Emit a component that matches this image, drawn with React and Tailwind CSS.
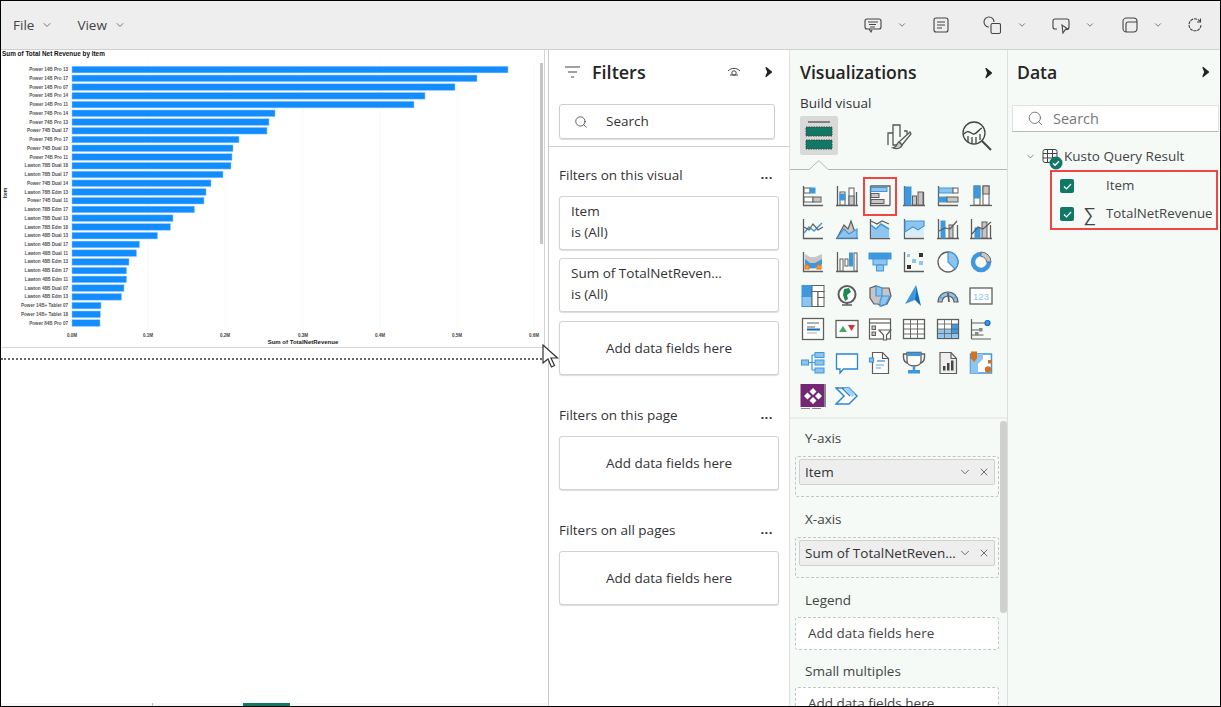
import React from 'react';
import { ChevronDown, X, Search } from 'lucide-react';

const FONT = "font-['Open_Sans','Noto_Sans',sans-serif]";
const G = '#5f5e5c';
const B = '#3f97dd';
const L = '#8ec4ee';
const C = '#c8c6c4';
const O = '#d9701e';
const T = '#117865';

// Bars read off the reference: [label, right edge in px]
const bars = [
    ['Power 14B Pro 13', 508], ['Power 14B Pro 17', 477], ['Power 14B Pro 07', 455], ['Power 14B Pro 14', 425],
    ['Power 14B Pro 11', 414], ['Power 74B Pro 14', 275], ['Power 74B Pro 13', 269], ['Power 74B Dual 17', 267],
    ['Power 74B Pro 17', 239], ['Power 74B Dual 13', 233], ['Power 74B Pro 11', 232], ['Lawton 78B Dual 18', 231],
    ['Lawton 78B Dual 17', 223], ['Power 74B Dual 14', 211], ['Lawton 78B Edm 13', 206], ['Power 74B Dual 11', 204],
    ['Lawton 78B Edm 17', 194.5], ['Lawton 78B Dual 13', 173], ['Lawton 78B Edm 18', 170.5], ['Lawton 48B Dual 13', 157.5],
    ['Lawton 48B Dual 17', 139.5], ['Lawton 48B Dual 11', 136.5], ['Lawton 48B Edm 13', 129], ['Lawton 48B Edm 17', 126.5],
    ['Lawton 48B Edm 11', 126.5], ['Lawton 48B Dual 07', 124], ['Lawton 48B Edm 13', 121.5], ['Power 14B+ Tablet 07', 101],
    ['Power 14B+ Tablet 18', 100.3], ['Power 84B Pro 07', 100],
];
const ticks = [['0.0M', 72], ['0.1M', 148], ['0.2M', 225], ['0.3M', 303], ['0.4M', 380], ['0.5M', 457], ['0.6M', 534]];

const Chart = () => (
    <svg width="543" height="297" viewBox="1 50 543 297" className="block">
        <text x="2" y="55.5" fontSize="6.4" fontWeight="700" fill="#111" fontFamily="Liberation Sans">Sum of Total Net Revenue by Item</text>
        {ticks.map(([t, x]) => (
            <g key={t}>
                <line x1={x} x2={x} y1="63" y2="330" stroke="#eeeeee" strokeWidth="0.7" strokeDasharray="1 1" />
                <text x={x} y="337" fontSize="4.6" fontWeight="700" textAnchor="middle" fill="#444" fontFamily="Liberation Sans">{t}</text>
            </g>
        ))}
        {bars.map(([name, end], i) => {
            const y = 69.6 + i * 8.74;
            return (
                <g key={i}>
                    <text x="68" y={y + 1.6} fontSize="4.6" fontWeight="700" textAnchor="end" fill="#555" fontFamily="Liberation Sans">{name}</text>
                    <rect x="72" y={y - 3.3} width={end - 72} height="6.6" fill="#118dff" stroke="#8fc8fb" strokeWidth="0.5" />
                </g>
            );
        })}
        <text x="303" y="343.5" fontSize="6" fontWeight="700" textAnchor="middle" fill="#222" fontFamily="Liberation Sans">Sum of TotalNetRevenue</text>
        <text x="0" y="0" fontSize="5" fontWeight="700" textAnchor="middle" fill="#222" fontFamily="Liberation Sans" transform="translate(7 193) rotate(-90)">Item</text>
        <rect x="540" y="63" width="3" height="181" fill="#c4c6c4" />
    </svg>
);

const PanelArrow = () => (
    <svg width="10" height="12" viewBox="0 0 10 12"><path d="M2 1.500 L7.500 6 L2 10.500 L3.800 6 Z" fill="#222" stroke="#222" strokeWidth="1.200" strokeLinejoin="round" /></svg>
);

const Ico = ({ children, s = 24 }) => (
    <svg width={s} height={s} viewBox="0 0 24 24" fill="none" strokeWidth="1.2">{children}</svg>
);

const axis = <path d="M2.500 2v19.500H22" stroke={G} strokeWidth="1.3" />;
const axisB = <path d="M1 21.500h22M2.500 2v19.500M21.500 8v13.500" stroke={G} strokeWidth="1.3" />;

const Box = ({ x, y, w, h, f = C, st = G }) => <rect x={x} y={y} width={w} height={h} fill={f} stroke={st} strokeWidth="1" />;

const vizIcons = [
    // row 1: bar and column charts
    <Ico>{axis}<Box x="3" y="4" w="6" h="5" st={G} f="#fff" /><Box x="9" y="4" w="5" h="5" f={B} st={B} /><Box x="3" y="13" w="9" h="5" f="#fff" /><Box x="12" y="13" w="8" h="5" /></Ico>,
    <Ico>{axisB}<Box x="5" y="8" w="5" h="13" f="#fff" /><Box x="5" y="10" w="5" h="6" f={B} st={B} /><Box x="14" y="4" w="5" h="17" f="#fff" /><Box x="14" y="12" w="5" h="9" /></Ico>,
    <Ico>{axis}<path d="M2.500 2H22V21.500" stroke={G} strokeWidth="1.3" /><Box x="3" y="3.500" w="16" h="4" f={L} st={B} /><Box x="3" y="9.500" w="8" h="4" /><Box x="3" y="15.500" w="13" h="4" /></Ico>,
    <Ico>{axisB}<Box x="3" y="3" w="6" h="18" f={B} st={B} /><Box x="10.500" y="12" w="4" h="9" /><Box x="16" y="8" w="5" h="13" /></Ico>,
    <Ico>{axis}<Box x="3" y="4" w="14" h="5" f={L} st={B} /><Box x="17" y="4" w="5" h="5" f="#fff" /><Box x="3" y="13" w="8" h="5" f={B} st={B} /><Box x="11" y="13" w="11" h="5" /></Ico>,
    <Ico><path d="M1 21.500h22" stroke={G} strokeWidth="1.3" /><Box x="5" y="2" w="6" h="19" f="#fff" /><Box x="5" y="2" w="6" h="12" f={B} st={B} /><Box x="14" y="2" w="6" h="19" f="#fff" /><Box x="14" y="2" w="6" h="8" /></Ico>,
    // row 2: line and area charts
    <Ico>{axis}<path d="M3 16l5-6 5 4 8-8" stroke={B} strokeWidth="1.5" /><path d="M3 10l5 3 4-6 5 6 5-3" stroke={G} /></Ico>,
    <Ico><path d="M1 21.500h22" stroke={G} strokeWidth="1.3" /><path d="M2 21l7-13 4 4 3-8 6 17z" fill={C} stroke={G} /><path d="M2 21l7-9 5 5 8-5v9z" fill={L} stroke={B} /></Ico>,
    <Ico>{axis}<path d="M3 8l5 4 5-5 8 5v9H3z" fill={L} /><path d="M3 8l5 4 5-5 8 5" stroke={B} strokeWidth="1.5" /><path d="M3 4l6 3 5-3 7 3" stroke={G} /></Ico>,
    <Ico>{axis}<path d="M3 4h19v5l-6 4-5-3-8 5z" fill={L} stroke={B} /><path d="M3 16l8-5 5 3 6-4v10H3z" fill="#d8ecfa" /></Ico>,
    <Ico>{axisB}<Box x="5" y="4" w="4" h="17" f={B} st={B} /><Box x="13" y="8" w="4" h="13" /><path d="M3 14l6-3 5 1 7-8" stroke={G} /></Ico>,
    <Ico>{axisB}<Box x="6" y="11" w="5" h="10" f={B} st={B} /><Box x="13" y="5" w="5" h="16" /><path d="M3 17l6-7 5 2 8-7" stroke={G} /></Ico>,
    // row 3: ribbon, waterfall, funnel, scatter, pie, donut
    <Ico>{axis}<path d="M4 4l5 3 5 0 7-3v12l-7 3-5 0-5-3z" fill={C} /><path d="M4 9l5 4h5l7-4v5l-7 4H9l-5-4z" fill={B} /><Box x="4" y="15" w="4" h="4" f="#f0a040" st={O} /><Box x="16" y="15" w="4" h="4" f="#f0a040" st={O} /></Ico>,
    <Ico>{axisB}<Box x="5" y="9" w="3" h="12" f="#fff" /><Box x="10" y="9" w="3" h="7" f="#fff" /><Box x="14.500" y="3" w="3" h="13" f={B} st={B} /><Box x="19" y="3" w="3" h="18" f="#fff" /></Ico>,
    <Ico><Box x="1" y="3" w="22" h="6" f={B} st={B} /><Box x="5" y="9" w="14" h="6" f={L} st={B} /><Box x="8.500" y="15" w="7" h="6" f={L} st={B} /></Ico>,
    <Ico>{axis}<rect x="17" y="3" width="4" height="4" fill="#333" /><rect x="10" y="9" width="4" height="4" fill={L} /><rect x="17" y="11" width="4" height="4" fill={L} /><rect x="5" y="15" width="4" height="4" fill="#333" /><rect x="5" y="4" width="3" height="3" fill={L} /></Ico>,
    <Ico><circle cx="12" cy="12" r="10" fill="#fff" stroke={G} strokeWidth="1.3" /><path d="M12 2a10 10 0 0 1 7 17l-7-7z" fill={L} stroke={B} /></Ico>,
    <Ico><circle cx="12" cy="12" r="8" stroke={B} strokeWidth="4.5" /><path d="M12 2a10 10 0 0 1 10 10h-4.500A5.500 5.500 0 0 0 12 6.500z" fill={C} stroke={G} strokeWidth="0.8" /></Ico>,
    // row 4: treemap, map, filled map, azure map, gauge, card
    <Ico><Box x="1" y="1.500" w="10" h="11" f={B} st={B} /><Box x="1" y="12.500" w="10" h="10" f={L} st={B} /><Box x="11" y="1.500" w="12" h="6" f="#fff" /><Box x="11" y="7.500" w="6" h="15" f="#fff" /><Box x="17" y="7.500" w="6" h="6" f="#fff" /><Box x="17" y="13.500" w="6" h="9" f="#fff" /></Ico>,
    <Ico><circle cx="12" cy="10.500" r="8.500" fill="#fff" stroke={G} strokeWidth="2" /><path d="M9 5l5-1 2 4-4 3 1 4-3 2-2-6z" fill="#1c8a4c" /><path d="M7 21h10M12 19v2" stroke={G} strokeWidth="1.4" /></Ico>,
    <Ico><path d="M2 4l6-2 6 2 7 0 2 8-4 8-6 2-3-2-4 0-4-6z" fill={C} stroke={G} /><path d="M8 2l6 2v8l-6 0z" fill={L} stroke={B} /><path d="M14 12h8l-4 8-6 2v-5z" fill={L} stroke={B} /></Ico>,
    <Ico><path d="M14 1L3 20l10-4z" fill={B} /><path d="M14 1l-1 15 6 6z" fill="#0f6cbd" /></Ico>,
    <Ico><path d="M2 18a10 10 0 0 1 20 0h-4a6 6 0 0 0-12 0z" fill={L} stroke={G} /><path d="M13 18l-1-9" stroke={G} strokeWidth="1.8" /><path d="M6 14l-3-1M18 14l3-1" stroke={B} /></Ico>,
    <Ico><rect x="1" y="4" width="22" height="16" fill="#fff" stroke={G} strokeWidth="1.3" /><text x="12" y="15.500" fontSize="9.5" textAnchor="middle" fill={L} stroke="none" fontFamily="Liberation Sans">123</text></Ico>,
    // row 5: multi-row card, KPI, slicer, table, matrix, key influencers
    <Ico><rect x="1.500" y="1.500" width="21" height="21" fill="#fff" stroke={G} strokeWidth="1.3" /><path d="M6 6h12M6 10h8" stroke={G} /><path d="M6 12.500h13" stroke="#0f6cbd" strokeWidth="2" /><path d="M6 16h10" stroke={C} strokeWidth="1.5" /></Ico>,
    <Ico><rect x="1" y="3.500" width="22" height="17" fill="#fff" stroke={G} strokeWidth="1.3" /><path d="M4 15l4-6 4 6z" fill="#4aa564" /><path d="M13 8h7l-3.500 6z" fill="#d13438" /></Ico>,
    <Ico><rect x="1.500" y="2" width="21" height="20" fill="#fff" stroke={G} strokeWidth="1.2" /><path d="M1.500 6h21" stroke={G} /><Box x="4" y="9" w="3.500" h="3.500" /><Box x="4" y="15" w="3.500" h="3.500" /><path d="M11 13h12l-4.500 5v5h-3v-5z" fill="#fff" stroke={G} /></Ico>,
    <Ico><rect x="1.500" y="2.500" width="21" height="19" fill="#fff" stroke={G} strokeWidth="1.3" /><path d="M1.500 7h21M1.500 12h21M1.500 17h21M8.500 2.500v19M15.500 2.500v19" stroke={G} strokeWidth="0.9" /></Ico>,
    <Ico><rect x="1.500" y="2.500" width="21" height="19" fill="#fff" stroke={G} strokeWidth="1.3" /><rect x="15" y="7" width="7" height="14" fill={B} /><rect x="2" y="12" width="13" height="4.500" fill={L} /><rect x="2" y="16.500" width="20" height="4.500" fill={L} /><path d="M1.500 7h21M1.500 12h21M1.500 16.500h21M8.500 2.500v19M15.500 2.500v19" stroke={G} strokeWidth="0.8" /></Ico>,
    <Ico><path d="M2.500 2v20M2.500 6H16M2.500 13H10M2.500 18h12M2.500 22H22" stroke={G} /><circle cx="18.500" cy="6" r="2.500" fill={B} stroke="#0f6cbd" /><rect x="10" y="11" width="3.500" height="3.500" fill="#888" /><rect x="6" y="15" width="3.500" height="3.500" fill="#888" /></Ico>,
    // row 6: decomposition tree, narrative, paginated, trophy, report, shape map
    <Ico><Box x="0.500" y="9" w="7" h="5" f={L} st={B} /><Box x="14" y="1.500" w="9" h="5" f={L} st={B} /><Box x="14" y="9" w="9" h="5" f={L} st={B} /><Box x="14" y="17" w="9" h="5" f={L} st={B} /><path d="M7.500 11.500H14M11 4v15M11 4h3M11 19h3" stroke={B} /></Ico>,
    <Ico><path d="M1.500 3h21v15H8.500l-3.500 4v-4H1.500z" fill="#fff" stroke="#2a86d4" strokeWidth="1.3" /></Ico>,
    <Ico><path d="M4.500 1.500h10l6 6v15h-16z" fill="#fff" stroke={G} strokeWidth="1.2" /><path d="M14.500 1.500v6h6" stroke={G} /><rect x="1.500" y="7" width="4" height="4" fill={L} stroke={B} /><path d="M9 10h8" stroke={B} strokeWidth="1.3" /><path d="M8 14h8M8 17h5" stroke={L} strokeWidth="1.3" /></Ico>,
    <Ico><path d="M5 3H1.500v3c0 4 3 6 5 6.500M19 3h3.500v3c0 4-3 6-5 6.500" stroke={G} strokeWidth="1.4" /><path d="M5 1.500h14V10c0 3-3 5-7 5s-7-2-7-5z" fill="#fff" stroke={G} strokeWidth="1.3" /><rect x="5" y="1.500" width="14" height="3.500" fill={B} /><path d="M12 15v4" stroke={B} strokeWidth="2.5" /><rect x="6" y="19" width="12" height="3.500" fill={B} /></Ico>,
    <Ico><path d="M4 1.500h11l5.500 6v15H4z" fill="#eee" stroke={G} strokeWidth="1.2" /><path d="M15 1.500v6h5.500" stroke={G} /><rect x="7" y="15" width="2.500" height="4.500" fill="#444" /><rect x="11" y="12" width="2.500" height="7.500" fill="#444" /><rect x="15" y="9.500" width="2.500" height="10" fill="#444" /></Ico>,
    <Ico><path d="M1.500 3h21v19h-21z" fill="#fff" stroke={B} strokeWidth="1.5" /><path d="M8 3h6v5l-5 5v9H1.500V8H8z" fill={L} /><path d="M2 0.500h6v7L5 11 2 7.500z" fill={O} /><circle cx="19" cy="18.500" r="3.200" fill={O} /><rect x="19" y="9" width="3.500" height="3.500" fill={O} /></Ico>,
    // row 7: Power Apps, Power Automate
    <svg width="26" height="26" viewBox="0 0 26 26"><rect x="0.500" y="1" width="25" height="23" fill="#742774" /><rect x="24" y="1" width="2" height="23" fill="#888" /><path d="M13 5l3.500 3.500L13 12 9.500 8.500zM7.500 9.500l3.500 3.500-3.500 3.500L4 13zM18.500 9.500L22 13l-3.500 3.500L15 13zM13 14l3.500 3.500L13 21l-3.500-3.500z" fill="#fff" /><path d="M1 25.500h9M12 25.500h9" stroke="#888" /></svg>,
    <Ico><path d="M1 4h13l8 8-8 8H1l8-8z" fill="#fff" stroke="#2a86d4" strokeWidth="1.5" /><path d="M7 4l8 8" stroke="#2a86d4" strokeWidth="1.5" /><path d="M9 4h5l6 6-3 3z" fill="#9fd0f5" /></Ico>,
];

const DropCard = ({ className = '' }) => (
    <div className={`w-[220px] h-[54px] flex items-center justify-center border border-[#d2d2d2] rounded-[3px] bg-white text-[13.5px] text-[#333] shadow-[0_1px_1px_#ddd] ${className}`}>Add data fields here</div>
);

const FilterCard = ({ title, className = '' }) => (
    <div className={`w-[220px] h-[54px] border border-[#d2d2d2] rounded-[3px] bg-white px-[11px] pt-[4px] text-[13.5px] leading-[21px] text-[#333] shadow-[0_1px_1px_#ddd] ${className}`}>
        <p>{title}</p>
        <p>is (All)</p>
    </div>
);

const SectionTitle = ({ label, className = '' }) => (
    <div className={`flex items-center justify-between w-[220px] h-5 text-[13.5px] text-[#333] ${className}`}>
        <span>{label}</span>
        <span className="mr-[6px] text-[13px] font-bold leading-none tracking-[0.5px] pb-[2px]">...</span>
    </div>
);

const Pill = ({ label }) => (
    <div className="mx-[3px] mt-[2px] h-[26px] flex items-center justify-between bg-[#eeeeee] border border-[#d0d0d0] rounded-[2px] pl-[5px] pr-[4px] text-[13.5px] text-[#333]">
        <span className="whitespace-nowrap">{label}</span>
        <span className="flex items-center gap-[6px] text-[#444]">
            <ChevronDown size={14} strokeWidth={1.3} />
            <X size={12} strokeWidth={1.5} />
        </span>
    </div>
);

const App = () => {
    return (
        <div className={`${FONT} w-[1221px] h-[707px] overflow-hidden flex flex-col border border-black bg-white`}>
            {/* Top toolbar */}
            <div className="h-[49px] shrink-0 flex items-center bg-[#eeeeee] border-b border-[#cfcfcf] text-[13.5px] text-[#444]">
                <span className="ml-[12px]">File</span>
                <ChevronDown size={12} strokeWidth={1.4} className="ml-[7px]" />
                <span className="ml-[24px]">View</span>
                <ChevronDown size={12} strokeWidth={1.4} className="ml-[7px]" />
                <div className="ml-auto mr-[16px] flex items-center text-[#444]">
                    <svg width="18" height="18" viewBox="0 0 18 18" fill="none" stroke="#444" strokeWidth="1.1"><rect x="1" y="3" width="16" height="10" rx="2" /><path d="M4 6h10M5 8.500h7M6 11h5M5 13l2 3 1-2" /></svg>
                    <ChevronDown size={10} strokeWidth={1.6} className="ml-[15px]" />
                    <svg width="18" height="18" viewBox="0 0 18 18" fill="none" stroke="#444" strokeWidth="1.1" className="ml-[25px]"><rect x="2" y="2" width="14" height="14" rx="2" /><path d="M5 6h8M5 9h8M5 12h5" /></svg>
                    <svg width="18" height="20" viewBox="0 0 18 20" fill="none" stroke="#444" strokeWidth="1.1" className="ml-[33px]"><path d="M11 7A5 5 0 1 0 6 12" /><rect x="8" y="8.500" width="9.500" height="10" rx="1.500" /></svg>
                    <ChevronDown size={10} strokeWidth={1.6} className="ml-[16px]" />
                    <svg width="18" height="18" viewBox="0 0 18 18" fill="none" stroke="#444" strokeWidth="1.1" className="ml-[25px]"><path d="M5 13H3a2 2 0 0 1-2-2V5a2 2 0 0 1 2-2h12a2 2 0 0 1 2 2v6a2 2 0 0 1-2 2h-2" /><path d="M10 9l1 8 2-3 3-1z" /></svg>
                    <ChevronDown size={10} strokeWidth={1.6} className="ml-[15px]" />
                    <svg width="18" height="18" viewBox="0 0 18 18" fill="none" stroke="#444" strokeWidth="1.1" className="ml-[26px]"><rect x="2" y="2" width="14" height="14" rx="3.500" /><path d="M5 16V8a2 2 0 0 1 2-2h9" /></svg>
                    <ChevronDown size={10} strokeWidth={1.6} className="ml-[14px]" />
                    <svg width="18" height="18" viewBox="0 0 18 18" fill="none" stroke="#444" strokeWidth="1.1" className="ml-[23px]"><path d="M14 5.500A6 6 0 1 0 15 9" strokeDasharray="3 0.800" /><path d="M14.500 2.500v3.500H11" /></svg>
                </div>
            </div>

            <div className="flex-1 min-h-0 flex">
                {/* Report canvas */}
                <div className="relative w-[548px] shrink-0 flex flex-col border-r border-[#c8c8c8]">
                    <div className="w-[544px] h-[298px] shrink-0 border-r border-b border-[#d4d4d4]">
                        <Chart />
                    </div>
                    <div className="w-[541px] mt-[10px] border-t-2 border-dotted border-[#666]" />
                    <div className="flex-1" />
                    <div className="h-[3px] flex bg-[#f5faf7]">
                        <div className="ml-[151px] w-px bg-[#bbb]" />
                        <div className="ml-[90px] w-[47px] bg-[#117865]" />
                    </div>
                    {/* resize cursor */}
                    <svg width="18" height="26" viewBox="0 0 18 26" className="absolute left-[541px] top-[294px]">
                        <path d="M1 1v18l5-4 3.500 8 3-1.500L9 14h6.500z" fill="#fff" stroke="#333" strokeWidth="1.200" />
                    </svg>
                </div>

                {/* Filters pane */}
                <div className="w-[241px] shrink-0 border-r border-[#dedede] bg-white">
                    <div className="h-[44px] flex items-center pl-[16px] pr-[15px]">
                        <svg width="16" height="12" viewBox="0 0 16 12" stroke="#444" strokeWidth="1.1"><path d="M0 1h15M3 6h9M6 11h3" /></svg>
                        <span className="ml-[11px] text-[18px] font-semibold text-[#252423]">Filters</span>
                        <svg width="14" height="10" viewBox="0 0 14 10" fill="none" stroke="#444" strokeWidth="1" className="ml-auto mr-[23px]"><path d="M1 4c3-3.500 9-3.500 12 0" /><circle cx="7" cy="6" r="2.200" /><path d="M3 8h8" /></svg>
                        <PanelArrow />
                    </div>
                    <div className="ml-[10px] mt-[10px] w-[216px] h-[35px] flex items-center border border-[#cfcfcf] rounded-[3px] shadow-[0_1px_1px_#ddd] text-[13.5px] text-[#333]">
                        <Search size={14} strokeWidth={1.3} className="ml-[14px]" />
                        <span className="ml-[18px]">Search</span>
                    </div>
                    <div className="mt-[7px] border-b border-[#cfcfcf]" />
                    <div className="pl-[10px]">
                        <SectionTitle label="Filters on this visual" className="mt-[18px]" />
                        <FilterCard title="Item" className="mt-[11px]" />
                        <FilterCard title="Sum of TotalNetReven..." className="mt-[8px]" />
                        <DropCard className="mt-[9px]" />
                        <SectionTitle label="Filters on this page" className="mt-[30px]" />
                        <DropCard className="mt-[11px]" />
                        <SectionTitle label="Filters on all pages" className="mt-[30px]" />
                        <DropCard className="mt-[11px]" />
                    </div>
                </div>

                {/* Visualizations pane */}
                <div className="w-[218px] shrink-0 border-r border-[#dedede] bg-[#f5faf7] flex flex-col">
                    <div className="h-[43px] shrink-0 pt-[2px] flex items-center justify-between pl-[10px] pr-[13px]">
                        <span className="text-[17.6px] font-semibold text-[#252423]">Visualizations</span>
                        <PanelArrow />
                    </div>
                    <p className="ml-[10px] h-5 text-[13.5px] leading-5 text-[#333]">Build visual</p>
                    <div className="mt-[3px] ml-[10px] flex items-center">
                        <div className="w-[38px] h-[39px] flex items-center justify-center bg-[#d9d9d9] rounded-[2px]">
                            <svg width="30" height="32" viewBox="0 0 30 32">
                                <path d="M4 2h22" stroke="#444" strokeWidth="1.200" />
                                <rect x="2" y="7" width="26" height="9" fill={T} stroke="#444" strokeDasharray="1.500 1" />
                                <rect x="2" y="20" width="26" height="9" fill={T} stroke="#444" strokeDasharray="1.500 1" />
                            </svg>
                        </div>
                        <svg width="30" height="30" viewBox="0 0 30 30" fill="none" stroke="#555" strokeWidth="1.300" className="ml-[46px]">
                            <path d="M4 24V12h5V4h7v12M9 12v12h4M20 10h3v3" />
                            <path d="M26 11L15 21l3 3L27 13z" />
                            <path d="M15 21c-3 1-1 5-6 6 5 2 9-1 9-3z" fill="#ccc" />
                        </svg>
                        <svg width="32" height="32" viewBox="0 0 32 32" fill="none" stroke="#444" strokeWidth="1.300" className="ml-[47px]">
                            <circle cx="13" cy="13" r="11" />
                            <path d="M21 21l9 9" strokeWidth="2" />
                            <path d="M3 14c4-5 6-1 9 0s6-5 9-6" stroke="#333" />
                            <path d="M7 16v6M11 17v6M15 17v6M19 14v6" />
                        </svg>
                    </div>
                    <svg width="217" height="10" viewBox="0 0 217 10" className="mt-[5px] shrink-0" fill="none">
                        <path d="M0 9.500H19L29 0.500L38 9.500H217" stroke="#b5b5b5" />
                    </svg>
                    <div className="h-[238px] shrink-0 mt-[9px] pl-[6px] grid grid-cols-[repeat(6,33.700px)] auto-rows-[33.400px] items-center justify-items-center content-start">
                        {vizIcons.map((icon, i) => (
                            <div key={i} className="relative flex items-center justify-center">
                                {icon}
                                {i === 2 && <div className="absolute -left-[5px] -top-[7px] w-[34px] h-[39px] border-2 border-[#f04545]" />}
                            </div>
                        ))}
                    </div>
                    <div className="relative flex-1 min-h-0 overflow-hidden border-t-2 border-[#ececec]">
                        <div className="absolute left-[210px] top-[2px] w-[7px] h-[192px] rounded-[3px] bg-[#cfd1cf]" />
                        <p className="ml-[15px] mt-[9px] h-5 text-[13.5px] leading-5 text-[#444]">Y-axis</p>
                        <div className="ml-[5px] mt-[8px] w-[204px] h-[41px] border border-dashed border-[#c4c4c4] rounded-[3px]">
                            <Pill label="Item" />
                        </div>
                        <p className="ml-[15px] mt-[12px] h-5 text-[13.5px] leading-5 text-[#444]">X-axis</p>
                        <div className="ml-[5px] mt-[8px] w-[204px] h-[41px] border border-dashed border-[#c4c4c4] rounded-[3px]">
                            <Pill label="Sum of TotalNetReven..." />
                        </div>
                        <p className="ml-[15px] mt-[12px] h-5 text-[13.5px] leading-5 text-[#444]">Legend</p>
                        <div className="ml-[5px] mt-[7px] w-[204px] h-[33px] flex items-center pl-[12px] bg-white border border-dashed border-[#c4c4c4] rounded-[3px] text-[13.5px] text-[#444]">Add data fields here</div>
                        <p className="ml-[15px] mt-[11px] h-5 text-[13.5px] leading-5 text-[#444]">Small multiples</p>
                        <div className="ml-[5px] mt-[6px] w-[204px] h-[33px] flex items-center pl-[12px] bg-white border border-dashed border-[#c4c4c4] rounded-[3px] text-[13.5px] text-[#444]">Add data fields here</div>
                    </div>
                </div>

                {/* Data pane */}
                <div className="flex-1 min-w-0 bg-[#f5faf7]">
                    <div className="h-[44px] flex items-center justify-between pl-[9px] pr-[9px]">
                        <span className="text-[17.6px] font-semibold text-[#252423]">Data</span>
                        <PanelArrow />
                    </div>
                    <div className="ml-[4px] mt-[11px] w-[207px] h-[27px] flex items-center bg-white border border-[#e2e2e2] border-b-[#bbbbbb] text-[14.5px] text-[#777]">
                        <Search size={17} strokeWidth={1.2} className="ml-[14px] text-[#666]" />
                        <span className="ml-[9px]">Search</span>
                    </div>
                    <div className="mt-[14px] h-5 flex items-center pl-[17px] text-[13.5px] text-[#444]">
                        <ChevronDown size={11} strokeWidth={1.3} />
                        <span className="relative ml-[6px]">
                            <svg width="16" height="16" viewBox="0 0 16 16" fill="none" stroke="#444" strokeWidth="1" className="block"><rect x="1" y="1.500" width="14" height="13" rx="2" /><path d="M1 5.500h14M1 10h14M5.500 1.500v13M10.500 1.500v13" /></svg>
                            <svg width="14" height="14" viewBox="0 0 14 14" className="absolute left-[7px] top-[8px]"><circle cx="7" cy="7" r="6.500" fill="#117865" /><path d="M4 7.200l2 2 4-4" stroke="#fff" strokeWidth="1.500" fill="none" /></svg>
                        </span>
                        <span className="ml-[6px]">Kusto Query Result</span>
                    </div>
                    {/* Selected fields, boxed in red in the reference */}
                    <div className="ml-[42px] mt-[4px] w-[168px] h-[60px] border-2 border-[#f04545] text-[13.3px] text-[#444] flex flex-col">
                        <div className="h-[28px] flex items-center">
                            <span className="ml-[8px] w-[14px] h-[14px] flex items-center justify-center rounded-[2px] bg-[#117865]">
                                <svg width="9" height="9" viewBox="0 0 9 9" fill="none" stroke="#fff" strokeWidth="1.200"><path d="M1 4.500l2.500 2.500L8 2" /></svg>
                            </span>
                            <span className="ml-[32px]">Item</span>
                        </div>
                        <div className="h-[28px] flex items-center">
                            <span className="ml-[8px] w-[14px] h-[14px] flex items-center justify-center rounded-[2px] bg-[#117865]">
                                <svg width="9" height="9" viewBox="0 0 9 9" fill="none" stroke="#fff" strokeWidth="1.200"><path d="M1 4.500l2.500 2.500L8 2" /></svg>
                            </span>
                            <span className="ml-[10px] w-[14px] text-[18px] leading-none">∑</span>
                            <span className="ml-[8px] whitespace-nowrap">TotalNetRevenue</span>
                        </div>
                    </div>
                </div>
            </div>
        </div>
    );
};

export default App;
